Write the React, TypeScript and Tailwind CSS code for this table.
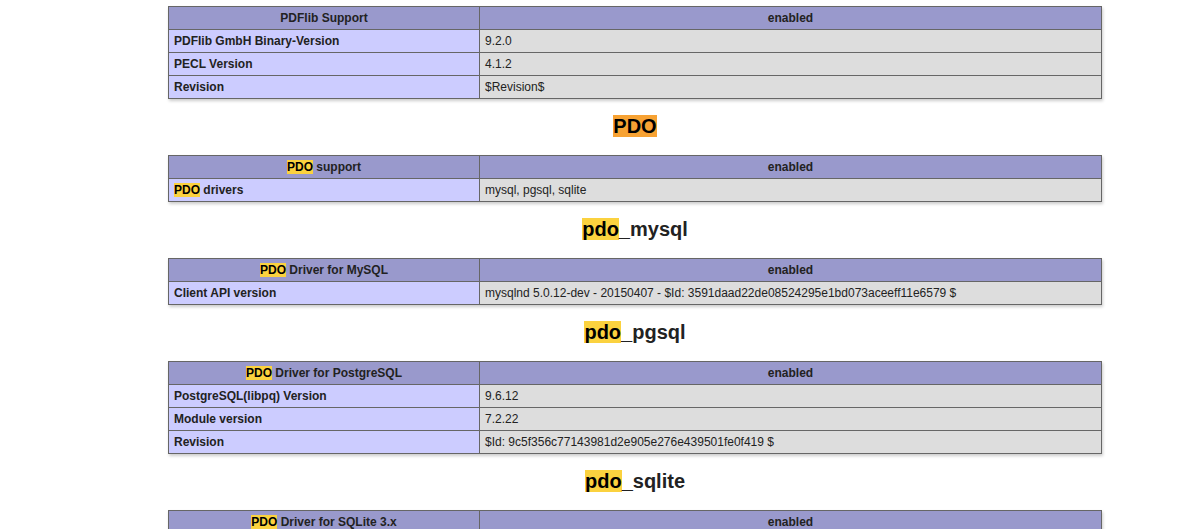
import type { ReactNode } from 'react';

type Section = {
  title?: ReactNode;
  header: [ReactNode, ReactNode];
  rows: [ReactNode, ReactNode][];
};

const Hl = ({ children, active }: { children: ReactNode; active?: boolean }) => (
  <mark className={`${active ? 'bg-[#f7a233]' : 'bg-[#fbd23f]'} text-black`}>{children}</mark>
);

const sections: Section[] = [
  {
    header: ['PDFlib Support', 'enabled'],
    rows: [
      ['PDFlib GmbH Binary-Version', '9.2.0'],
      ['PECL Version', '4.1.2'],
      ['Revision', '$Revision$'],
    ],
  },
  {
    title: <Hl active>PDO</Hl>,
    header: [<><Hl>PDO</Hl> support</>, 'enabled'],
    rows: [[<><Hl>PDO</Hl> drivers</>, 'mysql, pgsql, sqlite']],
  },
  {
    title: <><Hl>pdo</Hl>_mysql</>,
    header: [<><Hl>PDO</Hl> Driver for MySQL</>, 'enabled'],
    rows: [
      ['Client API version', 'mysqlnd 5.0.12-dev - 20150407 - $Id: 3591daad22de08524295e1bd073aceeff11e6579 $'],
    ],
  },
  {
    title: <><Hl>pdo</Hl>_pgsql</>,
    header: [<><Hl>PDO</Hl> Driver for PostgreSQL</>, 'enabled'],
    rows: [
      ['PostgreSQL(libpq) Version', '9.6.12'],
      ['Module version', '7.2.22'],
      ['Revision', '$Id: 9c5f356c77143981d2e905e276e439501fe0f419 $'],
    ],
  },
  {
    title: <><Hl>pdo</Hl>_sqlite</>,
    header: [<><Hl>PDO</Hl> Driver for SQLite 3.x</>, 'enabled'],
    rows: [],
  },
];

const InfoTable = ({ s, first }: { s: Section; first?: boolean }) => (
  <table
    className={`w-[934px] table-fixed border-collapse shadow-[1px_2px_3px_#ccc] ${first ? 'mt-[6px]' : ''}`}
  >
    <colgroup>
      <col className="w-[311px]" />
      <col />
    </colgroup>
    <thead>
      <tr className="bg-[#9999cc]">
        <th className="border border-[#666] px-[5px] py-[4px] text-center text-[12px] leading-[14px] font-bold text-[#222]">
          {s.header[0]}
        </th>
        <th className="border border-[#666] px-[5px] py-[4px] text-center text-[12px] leading-[14px] font-bold text-[#222]">
          {s.header[1]}
        </th>
      </tr>
    </thead>
    <tbody>
      {s.rows.map((r, i) => (
        <tr key={i}>
          <td className="border border-[#666] bg-[#ccccff] px-[5px] py-[4px] text-left text-[12px] leading-[14px] font-bold text-[#222]">
            {r[0]}
          </td>
          <td className="border border-[#666] bg-[#dddddd] px-[5px] py-[4px] text-left text-[12px] leading-[14px] text-[#222] break-words">
            {r[1]}
          </td>
        </tr>
      ))}
    </tbody>
  </table>
);

export default function App() {
  return (
    <div className="h-[529px] w-[1200px] overflow-hidden bg-white font-['Liberation_Sans',Arial,sans-serif] text-[#222]">
      <div className="ml-[168px] w-[934px]">
        {sections.map((s, i) => (
          <div key={i}>
            {s.title && (
              <h2 className="mt-[16px] mb-[17px] text-center text-[20px] leading-[23px] font-bold text-[#222]">
                {s.title}
              </h2>
            )}
            <InfoTable s={s} first={i === 0} />
          </div>
        ))}
      </div>
    </div>
  );
}
